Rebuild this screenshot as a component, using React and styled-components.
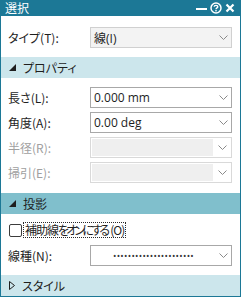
import React from "react";
import styled, { createGlobalStyle } from "styled-components";

const GlobalStyle = createGlobalStyle`
  html, body {
    margin: 0;
    padding: 0;
    background: #ffffff;
  }
  body {
    font-family: "Noto Sans CJK JP", "Noto Sans", sans-serif;
    font-feature-settings: "palt";
    font-size: 12px;
    color: #1e1e1e;
  }
`;

const Window = styled.div`
  width: 241px;
  height: 297px;
  box-sizing: border-box;
  border: 1px solid #1c7896;
  border-top: none;
  display: flex;
  flex-direction: column;
  background: #ffffff;
`;

const TitleBar = styled.div`
  height: 16px;
  margin: 0 -1px;
  background: #1c7896;
  color: #ffffff;
  display: flex;
  align-items: center;
  justify-content: space-between;
  padding: 0 6px 0 5px;
  font-size: 12px;
  line-height: 16px;
`;

const TitleIcons = styled.div`
  display: flex;
  align-items: center;
  gap: 3px;
`;

const Block = styled.div`
  display: flex;
  flex-direction: column;
  gap: ${(p) => p.gap || 4}px;
  padding: ${(p) => p.pad || "9px 7px 10px 7px"};
`;

const Row = styled.div`
  display: grid;
  grid-template-columns: 82px 142px;
  align-items: center;
  height: 21px;
`;

const Label = styled.span`
  color: ${(p) => (p.disabled ? "#a0a0a0" : "#1e1e1e")};
  line-height: 21px;
  white-space: nowrap;
`;

const Combo = styled.div`
  height: 21px;
  box-sizing: border-box;
  border: 1px solid ${(p) => (p.disabled ? "#d9d9d9" : p.flat ? "#d0d0d0" : "#a8a8a8")};
  background: ${(p) => (p.flat ? "#f3f3f3" : "#ffffff")};
  display: flex;
  align-items: center;
  padding: ${(p) => (p.disabled ? "1px" : "0 0 0 3px")};
  font-family: "Open Sans", "Noto Sans CJK JP", sans-serif;
  font-size: 12px;
  color: #1e1e1e;
`;

const ComboValue = styled.div`
  flex: 1;
  align-self: stretch;
  display: flex;
  align-items: center;
  justify-content: ${(p) => (p.center ? "center" : "flex-start")};
  background: ${(p) => (p.disabled ? "#efefef" : "transparent")};
  margin-right: ${(p) => (p.disabled ? "1px" : "0")};
`;

const Arrow = styled.div`
  width: 16px;
  display: flex;
  justify-content: center;
  align-items: center;
  color: #8a8a8a;
`;

const SectionHeader = styled.div`
  height: 21px;
  background: ${(p) => (p.active ? "#80bfcc" : "#cce6ec")};
  display: flex;
  align-items: center;
  gap: 7px;
  padding-left: 8px;
  font-size: 12px;
  color: #1e1e1e;
`;

const CheckRow = styled.label`
  display: flex;
  align-items: center;
  height: 16px;
  gap: 1px;
`;

const CheckBox = styled.span`
  width: 11px;
  height: 11px;
  border: 1px solid #3c3c3c;
  border-radius: 2px;
  background: #ffffff;
  margin-left: 1px;
`;

const CheckText = styled.span`
  border: 1px dotted #2a2a2a;
  padding: 0 1px;
  line-height: 14px;
  font-size: 12px;
  letter-spacing: -1px;
`;

const Kana = styled.span`
  letter-spacing: -2.8px;
  margin-right: 3px;
`;

const Dots = styled.span`
  letter-spacing: 0.3px;
  font-size: 9px;
  color: #333;
  padding-right: 2px;
`;

const Chevron = () => (
  <svg width="9" height="5" viewBox="0 0 9 5">
    <path d="M0.5 0.5 L4.5 4.5 L8.5 0.5" fill="none" stroke="currentColor" strokeWidth="1" />
  </svg>
);

const Triangle = ({ open }) =>
  open ? (
    <svg width="7" height="7" viewBox="0 0 7 7">
      <path d="M7 0 L7 7 L0 7 Z" fill="#1e1e1e" />
    </svg>
  ) : (
    <svg width="6" height="9" viewBox="0 0 6 9">
      <path d="M0.5 0.5 L5.5 4.5 L0.5 8.5 Z" fill="none" stroke="#1e1e1e" strokeWidth="1" />
    </svg>
  );

const ComboBox = ({ value, disabled, flat, center }) => (
  <Combo disabled={disabled} flat={flat}>
    <ComboValue disabled={disabled} center={center}>
      {value}
    </ComboValue>
    <Arrow>
      <Chevron />
    </Arrow>
  </Combo>
);

const App = () => {
  return (
    <>
      <GlobalStyle />
      <Window>
        <TitleBar>
          <span>選択</span>
          <TitleIcons>
            <svg width="11" height="11" viewBox="0 0 11 11">
              <rect x="0" y="5" width="11" height="2" fill="#fff" />
            </svg>
            <svg width="12" height="12" viewBox="0 0 12 12">
              <circle cx="6" cy="6" r="5" fill="none" stroke="#fff" strokeWidth="1.5" />
              <path d="M4.2 4.7 C4.2 2.9 7.8 2.9 7.8 4.7 C7.8 5.9 6 5.9 6 7.2" fill="none" stroke="#fff" strokeWidth="1.4" />
              <rect x="5.3" y="8" width="1.4" height="1.4" fill="#fff" />
            </svg>
            <svg width="10" height="10" viewBox="0 0 10 10">
              <path d="M1.5 1.5 L8.5 8.5 M8.5 1.5 L1.5 8.5" stroke="#fff" strokeWidth="2.2" />
            </svg>
          </TitleIcons>
        </TitleBar>

        <Block pad="11px 7px 9px 7px">
          <Row>
            <Label>タイプ(T):</Label>
            <ComboBox value="線(I)" flat />
          </Row>
        </Block>

        <SectionHeader>
          <Triangle open />
          <span>プロパティ</span>
        </SectionHeader>
        <Block>
          <Row>
            <Label>長さ(L):</Label>
            <ComboBox value="0.000 mm" />
          </Row>
          <Row>
            <Label>角度(A):</Label>
            <ComboBox value="0.00 deg" />
          </Row>
          <Row>
            <Label disabled>半径(R):</Label>
            <ComboBox disabled />
          </Row>
          <Row>
            <Label disabled>掃引(E):</Label>
            <ComboBox disabled />
          </Row>
        </Block>

        <SectionHeader active>
          <Triangle open />
          <span>投影</span>
        </SectionHeader>
        <Block gap={7} pad="8px 7px 9px 7px">
          <CheckRow>
            <CheckBox />
            <CheckText>
              補助線<Kana>をオンにする</Kana>(O)
            </CheckText>
          </CheckRow>
          <Row>
            <Label>線種(N):</Label>
            <ComboBox center value={<Dots>••••••••••••••••••••••</Dots>} />
          </Row>
        </Block>

        <SectionHeader>
          <Triangle />
          <span>スタイル</span>
        </SectionHeader>
      </Window>
    </>
  );
};

export default App;
